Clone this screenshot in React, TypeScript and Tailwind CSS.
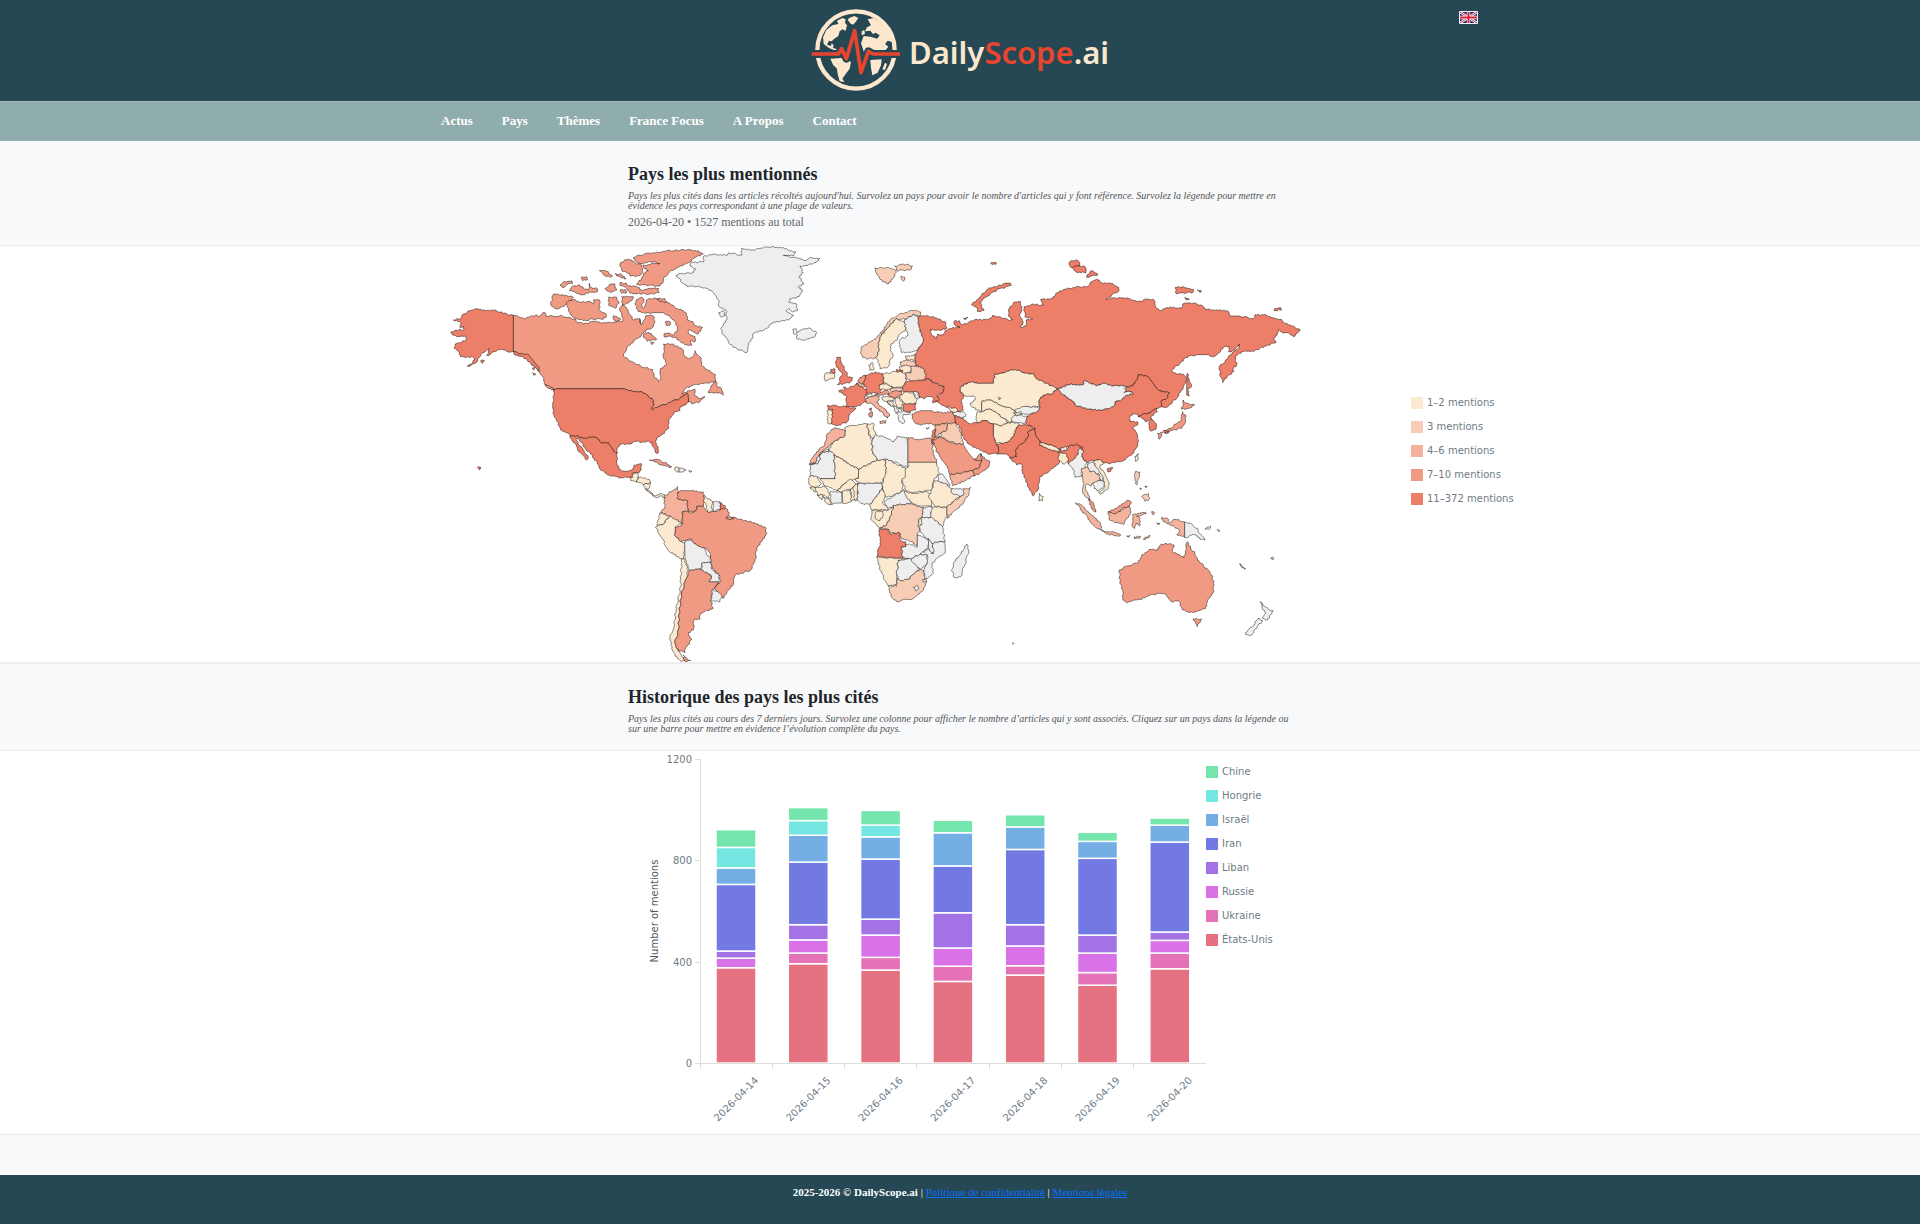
import React from "react";

type Level = 0 | 1 | 2 | 3 | 4 | 5;
type Shape = [Level, string];
type Region = { name: string; x: number; y: number; shapes: Shape[] };

const LEVEL_FILLS = ["#eeeeee", "#fbe9d0", "#f7cdb6", "#f4b29c", "#f19a83", "#ed7e67"];

/* Outlines are stored per region, in thirds of a pixel from the region's origin. */
const REGIONS: Region[] = [
  {
    name: "north-america",
    x: 0,
    y: -6,
    shapes: [
      [4, "220,226 240,232 252,236 270,230 285,226 300,228 312,216 318,230 335,226 350,230 362,226 380,232 408,238 412,248 440,250 460,244 485,250 510,248 528,246 548,244 545,225 538,205 548,192 560,205 570,225 580,240 592,235 602,250 598,235 605,255 612,240 620,226 640,228 645,245 635,265 620,268 610,280 598,292 585,300 575,310 560,325 550,345 566,362 585,370 610,382 638,388 642,408 656,425 663,412 660,390 672,378 680,370 670,350 672,325 670,312 695,312 728,328 732,345 745,357 758,350 765,332 782,352 784,375 800,388 826,403 828,425 805,430 780,432 752,438 735,448 725,462 748,452 765,448 762,465 775,475 795,470 780,485 755,492 752,484 746,486 742,460 730,465 715,480 695,484 680,494 660,498 640,510 635,508 640,498 638,480 620,464 600,455 570,452 548,446 350,446 340,450 325,440 312,430 312,415 298,395 285,370 262,350 240,342 220,334"],
      [5, "111,206 135,212 165,210 190,220 220,226 220,334 205,336 190,330 175,328 160,335 150,344 140,346 148,325 130,338 118,352 105,370 90,379 82,379 95,372 103,360 98,350 75,352 62,350 58,338 42,324 46,312 60,308 78,300 76,288 60,290 42,286 32,278 48,270 72,270 72,260 60,262 62,248 40,240 50,236 62,236 70,222 90,212"],
      [5, "220,334 240,342 262,342 285,370 298,384 298,394 285,382 268,366 250,352 235,348 222,342"],
      [5, "122,362 134,362 128,370"],
      [4, "276,385 284,382 282,390"],
      [4, "278,398 288,402 281,406"],
      [5, "350,446 548,446 570,452 600,455 620,464 638,480 640,498 635,508 660,498 680,494 695,484 715,480 730,465 742,460 746,486 738,494 722,500 720,512 702,518 690,535 684,555 686,565 668,582 650,594 646,605 654,628 654,640 645,636 636,608 620,604 605,608 590,604 565,612 545,612 532,622 532,638 520,632 505,608 488,610 478,600 465,592 430,595 410,588 390,586 375,575 362,570 352,545 342,530 338,500 342,480 340,452"],
      [5, "390,586 410,588 430,595 465,592 478,600 488,610 505,608 520,632 532,638 530,668 538,688 555,694 575,692 582,675 605,672 604,690 595,700 580,698 576,712 560,712 540,714 518,708 500,702 480,688 472,672 462,655 450,640 435,625 425,608 415,594 408,600 418,615 432,632 445,655 440,660 428,645 412,628 405,610 395,598"],
      [4, "628,660 650,658 675,668 695,680 690,684 668,676 645,666"],
      [1, "706,682 718,684 718,696 706,692"],
      [0, "718,684 738,690 730,696 718,696"],
      [0, "746,692 756,694 750,697"],
      [5, "112,682 123,683 118,690"],
      [4, "820,428 828,425 832,440 845,446 850,466 838,458 825,460 805,458 812,442"],
      [4, "315,432 330,438 345,450 335,450 320,442"],
      [4, "580,52 610,44 640,38 680,32 740,30 775,32 790,42 770,50 740,70 715,82 690,95 670,115 668,130 655,138 590,134 605,115 610,100 625,92 612,85 610,75 660,70 640,66 600,70 585,62"],
      [4, "540,72 555,58 575,60 585,68 605,76 608,95 598,108 575,108 560,98 545,92"],
      [4, "478,92 500,94 518,108 510,112 490,104"],
      [4, "526,100 545,104 558,116 545,114 530,108"],
      [4, "540,128 560,130 565,138 590,140 605,150 655,144 658,158 640,162 570,160 560,145 540,136"],
      [4, "388,152 400,138 420,136 435,148 445,150 448,130 456,144 472,146 472,155 450,156 430,164 410,160"],
      [4, "360,136 372,124 395,122 398,130 380,134 368,143"],
      [4, "424,112 440,110 442,120 428,122"],
      [4, "495,145 508,134 525,132 530,150 515,156 500,152"],
      [4, "540,150 555,148 560,158 545,160"],
      [4, "340,163 370,165 400,172 395,182 375,195 355,208 345,206 332,194"],
      [4, "380,188 400,178 420,188 445,184 460,192 462,178 478,180 480,200 475,208 498,222 498,232 485,238 455,236 440,242 415,238 395,228 385,210"],
      [4, "505,172 530,172 538,188 525,205 508,198"],
      [4, "545,170 580,170 575,182 560,190 548,195"],
      [4, "522,226 542,238 530,244 520,238"],
      [4, "585,190 592,178 605,172 612,178 605,195 610,205 620,180 640,175 680,185 700,196 712,206 730,212 740,220 742,240 758,244 765,258 788,262 775,282 760,275 748,268 745,280 765,290 765,305 752,302 755,316 740,314 720,304 705,292 690,288 672,290 672,282 690,280 700,285 712,270 712,258 700,240 690,228 670,218 640,218 615,220 595,215"],
      [4, "650,176 675,176 680,186 660,186"],
      [4, "612,282 625,276 640,288 650,298 635,300 622,304 610,292"],
      [4, "675,246 690,245 690,256 678,256"],
      [4, "632,308 642,308 636,314"],
      [0, "708,106 725,100 760,98 766,86 750,78 752,68 790,66 790,50 820,42 862,46 866,38 905,46 905,25 945,30 975,20 1020,22 1068,36 1060,48 1030,46 1060,52 1095,62 1110,52 1140,55 1128,68 1098,76 1080,78 1090,98 1078,108 1085,125 1092,132 1075,140 1088,152 1080,165 1068,175 1050,176 1046,186 1070,192 1072,212 1058,216 1046,206 1038,212 1060,225 1045,240 1000,246 975,268 940,280 938,295 925,310 920,338 900,330 880,322 865,305 850,285 842,265 850,255 860,240 858,210 838,200 835,180 820,158 800,145 775,138 745,140 730,130"],
      [0, "836,218 850,213 855,228 842,230"],
      [0, "1058,268 1068,266 1070,278 1085,270 1110,264 1130,278 1122,292 1098,300 1070,296 1072,284 1060,280"],
    ],
  },
  {
    name: "south-america",
    x: 180,
    y: 194,
    shapes: [
      [1, "30,112 38,112 40,98 50,98 54,112 50,126 32,122"],
      [1, "54,112 88,118 92,128 70,134 62,128 50,126"],
      [1, "70,134 92,128 84,148 76,146"],
      [2, "76,146 86,150 98,162 92,162 80,152"],
      [1, "98,162 108,168 120,160 135,164 134,175 126,168 112,173 98,168"],
      [3, "165,148 172,140 176,160 172,175 202,182 205,212 188,215 186,250 160,240 140,225 122,218 135,200 132,178 148,155"],
      [4, "172,158 185,152 215,152 250,156 252,180 250,196 230,200 228,212 205,216 202,182 172,175"],
      [1, "252,166 278,185 275,205 282,215 262,216 258,195 250,185"],
      [0, "278,186 300,184 300,208 282,214"],
      [5, "300,188 318,200 312,210 300,210"],
      [4, "188,215 205,216 212,220 228,212 230,200 250,196 262,216 282,214 300,210 318,205 328,218 320,235 345,232 370,242 405,248 438,265 438,285 410,325 405,365 390,392 345,405 340,432 308,475 282,445 302,425 298,405 275,385 272,345 255,325 220,310 212,298 185,305 162,285 165,262 188,255"],
      [4, "318,236 328,228 342,234 330,240"],
      [1, "118,220 150,228 128,255 112,258"],
      [1, "112,258 128,255 150,228 186,250 165,262 162,285 185,305 194,308 192,355 182,356 145,332 120,285 106,262"],
      [0, "194,305 215,298 225,312 255,325 258,342 272,350 272,368 245,370 242,388 208,390 195,355"],
      [1, "184,358 192,356 205,390 195,425 185,460 178,520 175,570 165,610 180,640 195,662 185,664 165,648 155,625 150,588 162,560 168,510 182,440"],
      [4, "208,390 242,388 275,408 268,425 298,425 282,445 272,482 280,505 242,520 240,538 222,540 220,570 205,578 216,598 195,628 195,638 175,632 165,610 175,570 178,520 185,460 195,425"],
      [0, "245,370 272,368 275,388 298,405 295,425 268,425 275,408 245,390"],
      [0, "278,448 305,465 300,485 272,482"],
      [4, "190,645 202,658 212,662 195,664"],
    ],
  },
  {
    name: "russia-and-asia",
    x: 460,
    y: -6,
    shapes: [
      [5, "52,232 80,226 110,234 138,248 140,266 115,270 90,268 95,285 110,295 112,282 130,285 135,272 160,262 180,262 162,252 162,244 178,242 182,252 200,252 212,242 230,238 265,240 278,226 300,230 325,240 338,240 325,225 328,205 340,188 362,185 365,210 360,230 370,245 362,262 378,258 378,240 398,236 375,232 372,200 400,192 430,196 422,178 460,174 470,158 495,148 520,142 560,140 575,125 590,118 605,128 640,132 656,142 655,155 635,165 618,180 640,174 665,174 690,176 710,184 728,182 735,176 760,178 770,205 785,212 800,202 845,204 848,192 870,188 905,195 918,208 950,210 982,212 990,228 1020,228 1060,236 1065,224 1100,226 1140,238 1165,255 1185,262 1200,268 1192,280 1180,290 1165,278 1150,280 1135,270 1132,285 1120,295 1128,308 1105,315 1080,325 1060,335 1035,332 1018,340 1005,350 1010,375 1000,385 1002,395 985,405 968,428 960,400 958,380 975,365 990,345 1015,325 1018,312 1005,330 985,335 988,320 970,322 950,345 935,350 925,344 890,344 865,348 845,365 815,392 830,402 850,402 860,415 850,440 830,475 800,502 785,500 782,485 800,475 808,458 785,456 765,440 740,408 715,404 708,422 698,438 680,442 672,436 640,438 615,430 590,438 570,430 555,420 548,436 515,432 470,446 440,430 412,418 402,402 370,398 345,388 310,398 285,402 280,430 240,430 215,424 185,438 180,455 195,466 185,478 190,510 180,516 150,505 118,490 105,485 110,470 130,455 132,440 100,428 85,416 70,420 78,405 68,384 48,378 45,360 45,345 60,320 70,300 56,260"],
      [5, "375,545 382,528 410,515 420,502 418,480 430,465 455,462 470,446 485,462 515,480 530,498 575,508 600,510 640,500 645,485 665,480 680,465 700,462 690,455 672,458 678,440 698,438 708,422 715,404 740,408 765,440 785,456 808,458 800,475 782,485 785,500 768,505 750,520 735,520 715,530 712,522 700,520 688,535 690,545 712,545 715,552 698,565 712,585 715,605 708,625 695,645 675,660 650,665 630,672 610,668 600,660 575,662 560,668 545,650 548,622 530,612 505,620 478,628 450,615 420,605 408,588 405,566 378,550"],
      [1, "185,438 215,424 240,430 280,430 285,402 310,398 345,388 370,398 402,402 412,418 440,430 470,446 455,462 430,465 418,480 415,500 370,502 345,515 325,502 300,495 268,480 245,484 245,515 232,510 215,500 210,490 225,480 222,468 205,468 195,468 180,455"],
      [0, "295,472 302,474 298,480"],
      [1, "245,515 245,484 268,480 300,495 325,502 345,515 345,535 330,548 310,535 285,515 268,505"],
      [1, "232,515 245,515 268,505 285,515 310,535 325,548 300,558 280,552 255,542 230,548 228,530"],
      [0, "345,510 370,500 420,502 410,515 385,524 355,522"],
      [0, "332,545 340,528 360,525 382,530 378,548 350,550"],
      [1, "340,518 362,514 366,520 350,526"],
      [1, "280,552 300,558 325,548 350,548 358,552 345,572 340,590 318,608 290,610 280,590"],
      [5, "290,612 318,608 340,590 345,572 358,555 375,552 405,566 385,575 385,590 370,608 348,628 350,650 330,652 320,642 292,642 295,625"],
      [5, "405,566 408,588 420,605 418,615 445,628 478,636 480,625 500,632 505,620 530,612 548,622 535,640 520,670 505,672 500,650 482,635 478,668 460,685 440,700 418,712 416,745 400,768 388,750 375,715 365,690 365,672 350,675 328,652 350,650 348,628 370,608 385,590 385,575"],
      [1, "420,605 450,615 478,628 474,636 445,628 418,615"],
      [1, "476,640 500,642 505,660 498,668 488,672 476,660"],
      [0, "482,622 500,622 498,632 482,630"],
      [0, "505,672 520,660 535,640 540,622 550,632 545,650 560,668 552,685 545,690 545,710 525,712 522,690"],
      [5, "622,686 638,682 632,694 624,696"],
      [1, "704,650 716,642 712,662 706,664"],
      [0, "475,446 515,432 548,436 555,420 570,430 590,438 615,430 640,438 672,436 678,452 672,458 690,455 700,462 680,465 665,480 645,485 640,500 600,510 575,508 530,498 515,480 485,462"],
      [5, "715,530 735,520 750,520 770,505 772,516 752,530 755,538 740,545"],
      [5, "748,545 755,538 768,550 768,568 750,572"],
      [4, "850,480 860,490 884,495 865,505 845,508 850,492"],
      [4, "848,515 858,530 852,555 845,565 815,572 800,580 788,575 810,565 828,552 840,545 845,530"],
      [4, "772,580 788,578 782,592 778,598"],
      [4, "792,570 806,572 796,580"],
      [5, "862,400 868,420 875,440 865,445 868,468 860,465 860,430"],
      [5, "1125,205 1142,203 1145,210 1122,212"],
      [5, "826,142 850,140 880,148 878,158 828,160"],
      [5, "892,150 905,154 900,158"],
      [5, "855,172 868,178 860,180"],
      [5, "508,66 530,60 540,72 538,78 512,82"],
      [5, "518,82 540,78 555,80 558,98 528,96"],
      [5, "560,108 575,92 594,105 560,112"],
      [5, "215,195 230,180 245,165 262,148 285,140 330,128 334,136 300,146 270,162 248,180 242,190 252,212 232,214 228,200"],
      [5, "272,70 285,66 290,70 278,74"],
      [5, "190,234 204,232 196,240"],
      [0, "158,516 190,514 198,525 190,535 178,530 165,528"],
      [1, "142,500 170,506 175,514 158,516 150,512"],
      [5, "162,528 178,532 198,542 212,552 230,548 255,542 280,552 280,590 290,612 295,625 292,642 260,640 235,625 215,618 195,600 185,580 178,558 165,545"],
      [4, "36,522 60,512 90,512 120,518 158,516 162,528 168,550 130,552 105,555 80,550 60,555 45,548 36,535"],
      [3, "105,555 145,550 142,568 122,580 105,590"],
      [2, "145,550 168,550 180,570 185,590 190,612 165,610 140,600 122,590 122,580 142,568"],
      [1, "98,592 120,588 112,600 100,614"],
      [5, "100,570 108,568 104,588 98,612 96,596"],
      [0, "78,564 88,562 82,568"],
      [4, "98,600 120,592 140,602 165,612 188,612 200,630 215,650 225,660 245,662 240,680 218,692 185,700 150,705 142,680 125,660 108,630"],
      [3, "150,705 185,700 218,692 222,708 195,722 158,738"],
      [4, "218,692 240,680 245,662 243,640 255,658 270,665 262,685 240,700 222,708"],
      [4, "222,658 243,642 245,662"],
    ],
  },
  {
    name: "europe",
    x: 340,
    y: -6,
    shapes: [
      [2, "245,320 265,308 282,298 300,282 320,255 330,240 355,225 385,215 405,210 422,216 420,228 400,222 380,238 350,236 335,250 318,270 300,290 295,310 298,330 288,352 262,358 248,352 242,335"],
      [1, "350,236 372,245 378,268 362,280 352,300 332,312 330,330 340,345 330,362 325,380 300,386 298,372 288,352 298,330 295,310 300,290 318,270 335,250"],
      [0, "372,240 380,238 400,222 412,228 416,260 430,300 420,320 405,333 365,338 358,320 360,300 385,285 378,268"],
      [2, "284,84 320,82 348,92 345,108 325,132 300,118"],
      [2, "344,78 370,72 398,78 390,90 350,92"],
      [2, "362,110 375,112 370,124"],
      [1, "266,376 278,368 282,388 270,392"],
      [5, "170,352 182,352 185,370 192,378 192,388 202,398 205,412 218,412 212,426 195,430 172,434 180,424 178,418 188,405 182,395 176,390 168,372"],
      [1, "138,398 150,398 164,400 162,416 135,422 134,408"],
      [5, "152,388 166,388 166,398 150,398"],
      [1, "144,510 158,508 158,530 154,552 142,548 142,530"],
      [5, "142,496 200,500 228,506 212,520 202,545 182,555 165,556 154,550 158,530 158,508 144,508"],
      [5, "176,452 195,450 190,442 205,446 228,432 240,440 260,448 262,462 255,470 258,485 245,492 230,500 198,500 200,470"],
      [2, "228,430 248,430 254,440 240,440"],
      [4, "240,412 256,406 254,424 248,432 234,426"],
      [5, "256,406 270,402 285,396 308,400 310,425 312,432 298,435 305,450 290,460 258,458 260,445 252,435 254,420"],
      [0, "256,464 275,460 280,470 262,474"],
      [4, "300,458 318,450 328,456 325,464 300,466 282,466"],
      [3, "258,475 280,468 298,470 298,480 290,486 305,500 325,518 330,525 322,535 310,520 290,505 275,490 258,488"],
      [4, "268,518 277,516 275,532 268,530"],
      [5, "268,506 275,504 274,514"],
      [3, "300,543 318,542 316,550 300,550"],
      [1, "310,402 350,392 375,398 378,425 370,442 345,444 318,430 310,422"],
      [1, "298,435 318,430 340,442 325,448 300,448"],
      [2, "330,448 345,443 370,444 365,452 335,456"],
      [4, "325,462 340,454 368,452 362,466 345,474 330,470"],
      [1, "305,472 325,470 345,476 340,480 322,484 345,500 335,498 318,484 308,480"],
      [1, "322,485 340,482 342,500 332,498"],
      [1, "345,476 358,472 368,490 365,505 350,500"],
      [0, "340,500 350,500 355,515 348,520"],
      [1, "355,505 367,505 365,512"],
      [0, "350,518 370,512 392,516 388,524 372,522 368,530 375,545 368,552 358,545 355,530"],
      [1, "358,470 372,456 400,458 412,478 408,490 375,492 365,480"],
      [5, "380,425 400,420 432,420 445,416 460,428 492,440 490,455 470,468 478,480 458,488 462,474 448,470 430,476 418,472 414,458 400,455 370,455 368,440"],
      [0, "400,455 415,458 418,475 408,475"],
      [5, "368,494 408,490 406,510 388,516 370,512"],
      [1, "376,348 405,344 404,362 378,358"],
      [2, "360,366 375,362 408,364 405,380 362,376"],
      [1, "358,380 380,374 396,382 390,398 370,400"],
      [5, "350,388 368,390 368,395 350,396"],
      [2, "378,400 395,398 392,380 408,378 428,384 438,405 430,420 400,422 378,418"],
    ],
  },
  {
    name: "africa",
    x: 340,
    y: 154,
    shapes: [
      [1, "196,92 195,82 235,74 262,72 265,100 275,120 278,160 292,180 236,208 162,165 146,150 160,125 195,108"],
      [1, "262,72 280,70 282,90 288,104 278,118 266,100"],
      [0, "288,104 315,112 342,125 352,108 380,112 384,125 384,202 322,178 292,180 278,160 276,120"],
      [3, "384,112 412,118 440,115 452,115 455,130 460,155 470,187 384,187"],
      [0, "90,192 112,192 120,180 120,158 146,156 146,148 162,165 166,236 120,236 92,228 90,210"],
      [3, "165,82 180,88 196,92 195,108 160,125 145,142 130,152 118,165 105,190 88,192 95,178 110,155 135,135 140,105"],
      [0, "88,194 105,190 118,165 130,152 146,148 146,156 120,158 120,180 112,192"],
      [1, "384,187 470,187 478,220 462,240 455,270 430,275 400,278 378,270 365,240 376,205 384,202"],
      [1, "315,180 322,178 376,205 376,232 365,240 370,270 335,290 315,290 305,255 318,215"],
      [1, "236,208 292,180 315,180 318,215 305,248 270,250 240,250 225,240 235,235"],
      [1, "162,165 236,208 235,235 210,240 190,255 170,272 135,258 120,236 166,236"],
      [1, "90,228 112,230 124,250 108,262 88,255 85,245"],
      [1, "90,262 108,262 112,270 102,276"],
      [1, "105,262 135,258 148,280 145,295 128,285 112,285"],
      [1, "112,285 128,285 125,300"],
      [1, "128,290 148,295 153,315 138,308"],
      [0, "150,275 185,276 186,308 155,314"],
      [1, "170,272 190,255 212,238 230,258 212,268 186,276"],
      [1, "187,274 212,268 214,305 188,310"],
      [1, "212,268 235,250 232,300 214,302"],
      [1, "220,262 235,250 232,300 224,301"],
      [0, "235,252 270,250 305,250 308,262 290,290 270,312 252,314 232,300"],
      [1, "308,262 315,290 308,305 325,330 275,330 270,312 290,290"],
      [0, "312,305 335,292 372,270 395,300 390,312 350,315 325,325"],
      [1, "372,275 400,280 440,275 455,290 455,318 420,318 390,305"],
      [1, "462,242 478,245 500,250 515,275 540,288 500,322 465,320 445,292 460,262"],
      [0, "472,225 485,222 510,258 500,252 478,245"],
      [0, "515,265 555,268 552,282 540,290 515,278"],
      [2, "552,268 572,262 568,280 545,315 520,335 502,355 500,322 540,290 552,282"],
      [1, "455,320 500,322 500,350 488,380 450,352"],
      [0, "428,322 455,320 452,350 425,355"],
      [1, "275,332 325,330 340,320 335,345 320,375 298,385 272,355"],
      [1, "288,335 308,334 310,345 300,362 285,355"],
      [2, "340,315 390,312 428,322 425,350 415,365 418,395 412,400 412,440 395,425 365,418 358,398 330,400 325,388 298,385 320,375 335,345"],
      [0, "422,355 455,352 488,380 495,425 455,430 440,415 420,395"],
      [1, "415,358 426,358 426,374 416,378"],
      [5, "298,388 325,388 330,402 358,398 362,422 378,425 378,440 365,440 368,475 290,470 300,430"],
      [0, "378,432 412,440 412,405 445,420 445,445 420,462 390,478 368,475 365,440 378,440"],
      [0, "455,430 495,425 496,458 455,490 460,520 435,540 432,510 442,490 442,465 420,462 445,448 460,462"],
      [0, "445,415 455,430 462,455 455,462 446,445"],
      [0, "390,478 420,462 442,465 440,495 420,508 400,492"],
      [0, "355,480 390,476 418,508 385,538 358,545 350,520"],
      [1, "290,472 340,475 385,475 355,480 350,520 350,555 325,558 305,520"],
      [2, "325,558 350,558 352,535 360,542 385,538 418,508 432,512 435,540 440,548 425,575 400,595 350,605 335,592"],
      [0, "400,562 410,556 416,566 406,572"],
      [0, "428,538 438,536 436,546 430,546"],
      [0, "560,432 566,455 552,500 542,530 522,532 515,510 522,485 540,465"],
      [1, "778,280 790,290 788,302 776,302"],
    ],
  },
  {
    name: "south-east-asia-and-oceania",
    x: 600,
    y: 114,
    shapes: [
      [0, "142,312 160,308 172,322 188,345 192,362 182,362 175,340 160,338 145,330"],
      [1, "160,305 180,298 190,308 180,320 195,345 206,365 206,385 180,402 176,396 195,382 190,355 175,330 165,315"],
      [2, "125,325 140,320 150,336 165,335 180,350 178,362 160,370 150,378 140,372 136,385 145,405 150,420 138,412 128,396 132,372 128,350"],
      [0, "160,368 180,362 192,365 190,382 176,392 162,385"],
      [4, "145,418 160,428 168,456 156,448"],
      [3, "106,428 122,434 145,455 165,475 182,490 184,510 165,500 148,480 125,450"],
      [3, "184,512 215,515 242,525 240,528 200,522"],
      [3, "260,528 270,526 266,532"],
      [3, "282,530 302,530 300,534 284,536"],
      [3, "310,538 330,526 326,534"],
      [3, "205,455 225,460 245,450 258,440 268,440 272,458 262,475 250,494 225,488 208,480"],
      [4, "205,455 230,445 245,432 262,420 274,428 268,440 250,442 240,455 220,462"],
      [3, "280,462 318,458 318,462 290,468 300,475 298,498 288,490 284,505 276,495 278,475"],
      [3, "335,455 344,458 340,465"],
      [3, "350,488 360,490 354,494"],
      [3, "365,472 382,475 388,488 405,478 434,486 434,532 410,524 418,515 412,505 385,492 370,485"],
      [0, "434,486 455,492 475,510 478,520 495,540 480,538 470,525 455,525 445,532 434,532"],
      [0, "495,508 512,498 508,508"],
      [0, "532,508 540,512 536,515"],
      [4, "238,630 262,618 295,608 305,585 328,568 350,572 360,556 378,550 402,555 398,575 432,594 438,560 442,545 452,565 465,580 472,600 490,615 515,645 523,675 518,700 505,718 497,745 480,752 460,758 428,750 415,722 395,725 380,705 360,700 325,708 300,718 262,728 248,720 250,700 240,665"],
      [4, "460,776 485,778 472,800"],
      [0, "660,725 672,738 685,748 700,752 682,780 668,775 676,762"],
      [0, "655,775 668,782 652,800 635,825 618,825 616,818 638,800"],
      [0, "598,612 617,626 614,628"],
      [2, "692,594 702,594 698,600"],
      [2, "286,335 300,336 298,352 290,375 284,360"],
      [2, "300,384 305,386 301,389"],
      [2, "315,378 322,380 317,383"],
      [2, "305,410 325,400 328,418 315,424"],
      [0, "-82,848 -78,850 -81,853"],
    ],
  },
];

/* Breaks a long edge into short uneven steps; an edge shared by two
   countries gets the same steps from either side. */
function coastline(source: string): string {
  const pts = source.split(" ").map((p) => p.split(",").map(Number));
  const out: string[] = [];
  pts.forEach(([ax, ay], i) => {
    const [bx, by] = pts[(i + 1) % pts.length];
    out.push(`${ax},${ay}`);
    const dx = bx - ax;
    const dy = by - ay;
    const length = Math.hypot(dx, dy);
    const straight = length > 25 && (Math.abs(dx) < 2 || Math.abs(dy) < 2);
    if (length < 9 || straight) return;
    const steps = Math.round(length / 5);
    const forward = ax < bx || (ax === bx && ay < by);
    const sign = forward ? 1 : -1;
    for (let k = 1; k < steps; k++) {
      const x = ax + (dx * k) / steps;
      const y = ay + (dy * k) / steps;
      const wave = Math.sin(Math.round(x) * 12.99 + Math.round(y) * 78.23) * 2.2 * sign;
      out.push(`${(x - (dy / length) * wave).toFixed(1)},${(y + (dx / length) * wave).toFixed(1)}`);
    }
  });
  return out.join(" ");
}

function WorldMap() {
  return (
    <svg viewBox="0 0 880 416" className="block w-[880px] shrink" role="img" aria-label="Carte des mentions par pays">
      {REGIONS.map((region) => (
        <g key={region.name} transform={`translate(${region.x} ${region.y}) scale(0.33333)`}>
          {region.shapes.map(([level, points], i) => (
            <polygon
              key={i}
              points={coastline(points)}
              fill={LEVEL_FILLS[level]}
              stroke="#000000"
              strokeOpacity={0.75}
              strokeWidth={1.8}
              strokeLinejoin="round"
            />
          ))}
        </g>
      ))}
    </svg>
  );
}

const MAP_LEGEND = [
  { label: "1–2 mentions", swatch: "bg-[#fbe9d0]" },
  { label: "3 mentions", swatch: "bg-[#f7cdb6]" },
  { label: "4–6 mentions", swatch: "bg-[#f4b29c]" },
  { label: "7–10 mentions", swatch: "bg-[#f19a83]" },
  { label: "11–372 mentions", swatch: "bg-[#ed7e67]" },
];

const SERIES = [
  { label: "États-Unis", color: "#e57280", swatch: "bg-[#e57280]" },
  { label: "Ukraine", color: "#e572b7", swatch: "bg-[#e572b7]" },
  { label: "Russie", color: "#d972e6", swatch: "bg-[#d972e6]" },
  { label: "Liban", color: "#a372e5", swatch: "bg-[#a372e5]" },
  { label: "Iran", color: "#7279e3", swatch: "bg-[#7279e3]" },
  { label: "Israël", color: "#74aee5", swatch: "bg-[#74aee5]" },
  { label: "Hongrie", color: "#75e6e1", swatch: "bg-[#75e6e1]" },
  { label: "Chine", color: "#74e6ad", swatch: "bg-[#74e6ad]" },
];

const DAYS = [
  { date: "2026-04-14", counts: [376, 0, 38, 28, 263, 65, 81, 70] },
  { date: "2026-04-15", counts: [392, 42, 52, 60, 247, 106, 58, 51] },
  { date: "2026-04-16", counts: [367, 50, 88, 63, 237, 88, 46, 58] },
  { date: "2026-04-17", counts: [322, 60, 72, 139, 185, 131, 0, 49] },
  { date: "2026-04-18", counts: [347, 37, 78, 84, 297, 89, 0, 48] },
  { date: "2026-04-19", counts: [307, 50, 77, 71, 303, 67, 0, 36] },
  { date: "2026-04-20", counts: [372, 62, 50, 33, 355, 67, 0, 28] },
];

const AXIS_LEFT = 72;
const AXIS_BOTTOM = 312;
const STEP = 72.3;
const UNIT = 304 / 1200;

function HistoryChart() {
  return (
    <svg viewBox="0 0 578 383" className="block w-[578px] shrink font-['DejaVu_Sans',sans-serif]" role="img" aria-label="Historique des mentions">
      <text x={30} y={160} transform="rotate(-90 30 160)" textAnchor="middle" fontSize={10} fill="#50565e">
        Number of mentions
      </text>
      {[0, 400, 800, 1200].map((value) => {
        const y = Math.round(AXIS_BOTTOM - value * UNIT);
        return (
          <g key={value}>
            <text x={64} y={y + 4} textAnchor="end" fontSize={10} fill="#6e7b86">
              {value}
            </text>
            <line x1={AXIS_LEFT - 5} x2={AXIS_LEFT} y1={y + 0.5} y2={y + 0.5} stroke="#dddddd" />
          </g>
        );
      })}
      {DAYS.map((day, i) => {
        const x = AXIS_LEFT + STEP * i + 16;
        let total = 0;
        return (
          <g key={day.date}>
            {day.counts.map((count, s) => {
              const top = AXIS_BOTTOM - (total + count) * UNIT;
              total += count;
              return count === 0 ? null : (
                <rect key={s} x={x} y={top} width={40} height={count * UNIT} fill={SERIES[s].color} stroke="#ffffff" strokeWidth={1.5} />
              );
            })}
            <text x={x + 43} y={330} transform={`rotate(-45 ${x + 43} 330)`} textAnchor="end" fontSize={10} fill="#6e7b86">
              {day.date}
            </text>
          </g>
        );
      })}
      <path
        d={`M${AXIS_LEFT + 0.5} 8V313M${AXIS_LEFT} 312.5H578`}
        fill="none"
        stroke="#dddddd"
      />
      {[0, 1, 2, 3, 4, 5, 6, 7].map((i) => (
        <line key={i} x1={Math.floor(AXIS_LEFT + STEP * i) + 0.5} x2={Math.floor(AXIS_LEFT + STEP * i) + 0.5} y1={313} y2={318} stroke="#dddddd" />
      ))}
    </svg>
  );
}

function Legend({ items }: { items: { label: string; swatch: string }[] }) {
  return (
    <ul className="flex flex-col gap-3 font-['DejaVu_Sans',sans-serif] text-[10px] leading-3 text-[#6e7b86]">
      {items.map((item) => (
        <li key={item.label}>
          <button type="button" className="flex items-center gap-1 whitespace-nowrap">
            <span className={`size-3 ${item.swatch}`} />
            {item.label}
          </button>
        </li>
      ))}
    </ul>
  );
}

function Logo() {
  return (
    <svg viewBox="0 0 310 101" className="block h-[101px] w-[310px]" role="img" aria-label="DailyScope.ai">
      <g transform="scale(0.33333)">
        <circle cx="153" cy="150" r="116" fill="none" stroke="#fde8ce" strokeWidth="13" />
        <g fill="#fde8ce">
          <path d="M96 62 L112 54 L122 58 L120 68 L126 76 L122 92 L112 88 L104 94 L100 108 L88 116 L80 124 L72 122 L66 134 L78 138 L80 130 L86 136 L84 144 L98 148 L92 152 L72 144 L56 132 L54 112 L64 90 L82 76 L100 72 Z" />
          <path d="M132 54 L148 48 L160 54 L152 66 L144 74 L136 70 L128 60 Z" />
          <path d="M188 58 L206 54 L226 66 L244 84 L256 106 L262 126 L248 122 L240 132 L250 140 L240 152 L228 132 L216 118 L224 106 L212 98 L204 102 L196 92 L180 94 L186 82 L198 76 Z" />
          <path d="M170 94 L178 90 L180 102 L170 106 Z" />
          <path d="M176 108 L196 110 L222 118 L234 142 L244 152 L206 152 L196 144 L180 166 L168 130 Z" />
          <path d="M76 176 L112 174 L138 186 L134 206 L122 222 L112 236 L118 246 L104 244 L98 222 L96 206 L84 194 Z" />
          <path d="M196 180 L230 178 L228 196 L218 218 L202 226 L198 204 Z" />
          <path d="M240 188 L246 192 L240 210 L232 208 Z" />
        </g>
        <path d="M20 162H100L110 146L124 176L149 92L168 218L190 154L204 162H285" fill="none" stroke="#254854" strokeWidth="24" strokeLinejoin="round" />
        <path d="M20 162H100L110 146L124 176L149 92L168 218L190 154L204 162H285" fill="none" stroke="#e8452f" strokeWidth="11" strokeLinejoin="round" />
      </g>
      <text x={104} y={64} fontSize={31} className="font-['Noto_Sans','Open_Sans',sans-serif] font-semibold" fill="#fde8ce">
        Daily<tspan fill="#e8452f">Scope</tspan>.ai
      </text>
    </svg>
  );
}

function UkFlag() {
  return (
    <svg viewBox="0 0 19 13" className="block h-[13px] w-[19px]">
      <rect width="19" height="13" rx="1" fill="#f2f2f5" />
      <rect x="1" y="1" width="17" height="11" fill="#1b2a72" />
      <path d="M1 1L18 12M18 1L1 12" stroke="#ffffff" strokeWidth="2.4" />
      <path d="M1 1L18 12M18 1L1 12" stroke="#d8203e" strokeWidth="0.9" />
      <path d="M9.5 1V12M1 6.5H18" stroke="#ffffff" strokeWidth="3.4" />
      <path d="M9.5 1V12M1 6.5H18" stroke="#d8203e" strokeWidth="2" />
    </svg>
  );
}

const NAV = ["Actus", "Pays", "Thèmes", "France Focus", "A Propos", "Contact"];

function SectionHeading({ title, description, meta }: { title: string; description: string; meta?: string }) {
  return (
    <div className="border-b border-[#ececec] bg-[#f8f9fb] pt-[19px] pb-4">
      <div className="mx-auto max-w-[664px]">
        <h2 className="text-lg leading-7 font-bold text-[#212529]">{title}</h2>
        <p className="mt-[3px] text-[10px] leading-[10px] text-[#555555] italic">{description}</p>
        {meta && <p className="mt-[5px] text-[12px] leading-[13px] text-[#666666]">{meta}</p>}
      </div>
    </div>
  );
}

export default function App() {
  return (
    <div className="min-h-screen bg-[#f8f9fb] font-['Liberation_Serif',serif]">
      <header className="bg-[#254854]">
        <div className="mx-auto grid max-w-[1320px] grid-cols-[1fr_310px_1fr]">
          <a href="#accueil" className="col-start-2">
            <Logo />
          </a>
          <div className="flex items-start justify-end pt-[11px] pr-[142px]">
            <button type="button" aria-label="English">
              <UkFlag />
            </button>
          </div>
        </div>
      </header>

      <nav className="border-t border-[#a3bbbb] bg-[#90adad]">
        <ul className="mx-auto flex max-w-[1038px] gap-[29px] text-[13px] leading-[19px] font-bold text-white">
          {NAV.map((item) => (
            <li key={item}>
              <a href="#" className="block pt-[9px] pb-[11px]">
                {item}
              </a>
            </li>
          ))}
        </ul>
      </nav>

      <main>
        <section>
          <SectionHeading
            title="Pays les plus mentionnés"
            description="Pays les plus cités dans les articles récoltés aujourd'hui. Survolez un pays pour avoir le nombre d'articles qui y font référence. Survolez la légende pour mettre en évidence les pays correspondant à une plage de valeurs."
            meta="2026-04-20 • 1527 mentions au total"
          />
          <div className="border-b-2 border-[#ececec] bg-white">
            <div className="mx-auto flex max-w-[1120px] items-center justify-between pl-10">
              <WorldMap />
              <div className="w-[109px] shrink-0 pb-1.5">
                <Legend items={MAP_LEGEND} />
              </div>
            </div>
          </div>
        </section>

        <section>
          <SectionHeading
            title="Historique des pays les plus cités"
            description="Pays les plus cités au cours des 7 derniers jours. Survolez une colonne pour afficher le nombre d’articles qui y sont associés. Cliquez sur un pays dans la légende ou sur une barre pour mettre en évidence l’évolution complète du pays."
          />
          <div className="border-b border-[#ececec] bg-white">
            <div className="mx-auto flex max-w-[664px] items-start">
              <HistoryChart />
              <div className="w-[86px] shrink-0 pt-[15px]">
                <Legend items={[...SERIES].reverse()} />
              </div>
            </div>
          </div>
        </section>
      </main>

      <footer className="mt-10 bg-[#254854] pt-[9px] pb-6 text-center text-[11px] leading-4 text-white">
        <span className="font-bold">2025-2026 © DailyScope.ai</span> |{" "}
        <a href="#confidentialite" className="text-[#0d6efd] underline">
          Politique de confidentialité
        </a>{" "}
        |{" "}
        <a href="#mentions" className="text-[#0d6efd] underline">
          Mentions légales
        </a>
      </footer>
    </div>
  );
}
